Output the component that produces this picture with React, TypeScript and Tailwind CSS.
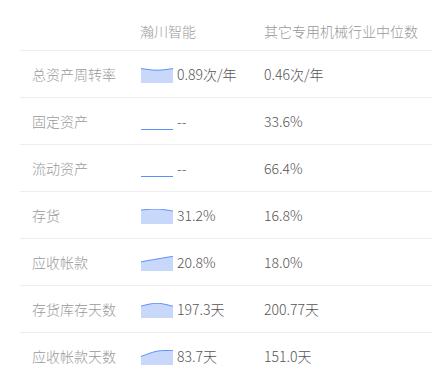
import React from 'react';

type Row = {
  label: string;
  value: string;
  median: string;
  points: number[] | null;
};

// sparkline points are y offsets from the top of a 32x15 box
const rows: Row[] = [
  { label: '总资产周转率', value: '0.89次/年', median: '0.46次/年', points: [0.6, 2.2, 0.6] },
  { label: '固定资产', value: '--', median: '33.6%', points: null },
  { label: '流动资产', value: '--', median: '66.4%', points: null },
  { label: '存货', value: '31.2%', median: '16.8%', points: [1, 0, 2] },
  { label: '应收帐款', value: '20.8%', median: '18.0%', points: [5.8, 3, 0.3] },
  { label: '存货库存天数', value: '197.3天', median: '200.77天', points: [3, 0.2, 3.2] },
  { label: '应收帐款天数', value: '83.7天', median: '151.0天', points: [6.4, 1.2, 0.4] },
];

const W = 32;
const H = 15;

function smoothPath(ys: number[]) {
  const pts = ys.map((y, i) => [(i * W) / (ys.length - 1), y]);
  let d = `M${pts[0][0]} ${pts[0][1]}`;
  for (let i = 0; i < pts.length - 1; i++) {
    const p0 = pts[i - 1] || pts[i];
    const p1 = pts[i];
    const p2 = pts[i + 1];
    const p3 = pts[i + 2] || p2;
    const c1x = p1[0] + (p2[0] - p0[0]) / 6;
    const c1y = p1[1] + (p2[1] - p0[1]) / 6;
    const c2x = p2[0] - (p3[0] - p1[0]) / 6;
    const c2y = p2[1] - (p3[1] - p1[1]) / 6;
    d += ` C${c1x} ${c1y} ${c2x} ${c2y} ${p2[0]} ${p2[1]}`;
  }
  return d;
}

const Sparkline: React.FC<{ points: number[] | null }> = ({ points }) => {
  if (!points) {
    return (
      <svg width={W} height={H + 1} viewBox={`0 0 ${W} ${H + 1}`} className="mt-[3px] shrink-0">
        <line x1="0" y1={H - 0.5} x2={W} y2={H - 0.5} stroke="#5B8FF9" strokeWidth="1" />
      </svg>
    );
  }
  const line = smoothPath(points);
  return (
    <svg width={W} height={H + 1} viewBox={`0 0 ${W} ${H + 1}`} className="mt-[3px] shrink-0">
      <path d={`${line} L${W} ${H} L0 ${H} Z`} fill="#C7D8FB" />
      <path d={line} fill="none" stroke="#5B8FF9" strokeWidth="1" />
    </svg>
  );
};

export default function App() {
  return (
    <div
      className="w-[437px] h-[388px] bg-white overflow-hidden text-[14px] font-light"
      style={{ fontFamily: '"Noto Sans CJK SC", "Noto Sans", sans-serif' }}
    >
      <div className="ml-[20px] w-[412px]">
        <div className="grid grid-cols-[108px_124px_1fr] pl-3 h-[50px] pt-[21px] leading-5 text-[#999]">
          <div />
          <div>瀚川智能</div>
          <div>其它专用机械行业中位数</div>
        </div>
        {rows.map((r) => (
          <div
            key={r.label}
            className="grid grid-cols-[108px_124px_1fr] items-center pl-3 h-[47px] border-t border-[#eeeeee] leading-5"
          >
            <div className="text-[#999]">{r.label}</div>
            <div className="flex items-center gap-[4px] pl-[1px] text-[#555]">
              <Sparkline points={r.points} />
              <span>{r.value}</span>
            </div>
            <div className="text-[#555]">{r.median}</div>
          </div>
        ))}
      </div>
    </div>
  );
}
